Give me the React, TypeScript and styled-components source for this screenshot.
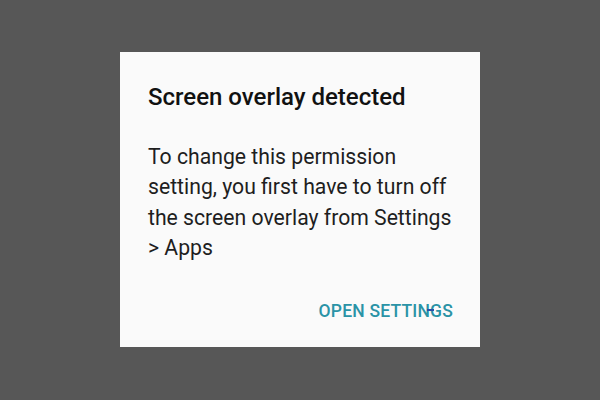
import React from "react";
import styled, { createGlobalStyle } from "styled-components";

const Global = createGlobalStyle`
  html, body { margin: 0; padding: 0; }
  body {
    width: 600px;
    height: 400px;
    background: #575757;
    font-family: Roboto, "Noto Sans", "Liberation Sans", sans-serif;
    overflow: hidden;
  }
`;

const Screen = styled.div`
  width: 600px;
  height: 400px;
  display: flex;
  justify-content: center;
  padding-top: 52px;
  box-sizing: border-box;
`;

const Dialog = styled.div`
  width: 360px;
  height: 295px;
  background: #fafafa;
  box-sizing: border-box;
  padding: 30px 24px 0 28px;
  display: flex;
  flex-direction: column;
`;

const Title = styled.h1`
  margin: 0;
  font-size: 24px;
  font-weight: 500;
  line-height: 30px;
  color: #111;
`;

const Body = styled.p`
  margin: 30px 0 0;
  font-size: 21.2px;
  font-weight: 400;
  line-height: 30.3px;
  color: #1e1e1e;
`;

const Actions = styled.div`
  display: flex;
  justify-content: flex-end;
  margin-top: 36px;
  padding-right: 3px;
`;

const Button = styled.span`
  position: relative;
  font-size: 17.5px;
  font-weight: 500;
  color: #2a93a6;
  letter-spacing: 0.2px;
  line-height: 24px;
`;

const Glitch = styled.span`
  position: absolute;
  left: 108px;
  top: 10px;
  width: 7px;
  height: 2px;
  background: #2a4fa8;
`;

export default function App() {
  return (
    <>
      <Global />
      <Screen>
        <Dialog>
          <Title>Screen overlay detected</Title>
          <Body>
            To change this permission setting, you first have to turn off the
            screen overlay from Settings &gt; Apps
          </Body>
          <Actions>
            <Button>
              OPEN SETTINGS
              <Glitch />
            </Button>
          </Actions>
        </Dialog>
      </Screen>
    </>
  );
}
